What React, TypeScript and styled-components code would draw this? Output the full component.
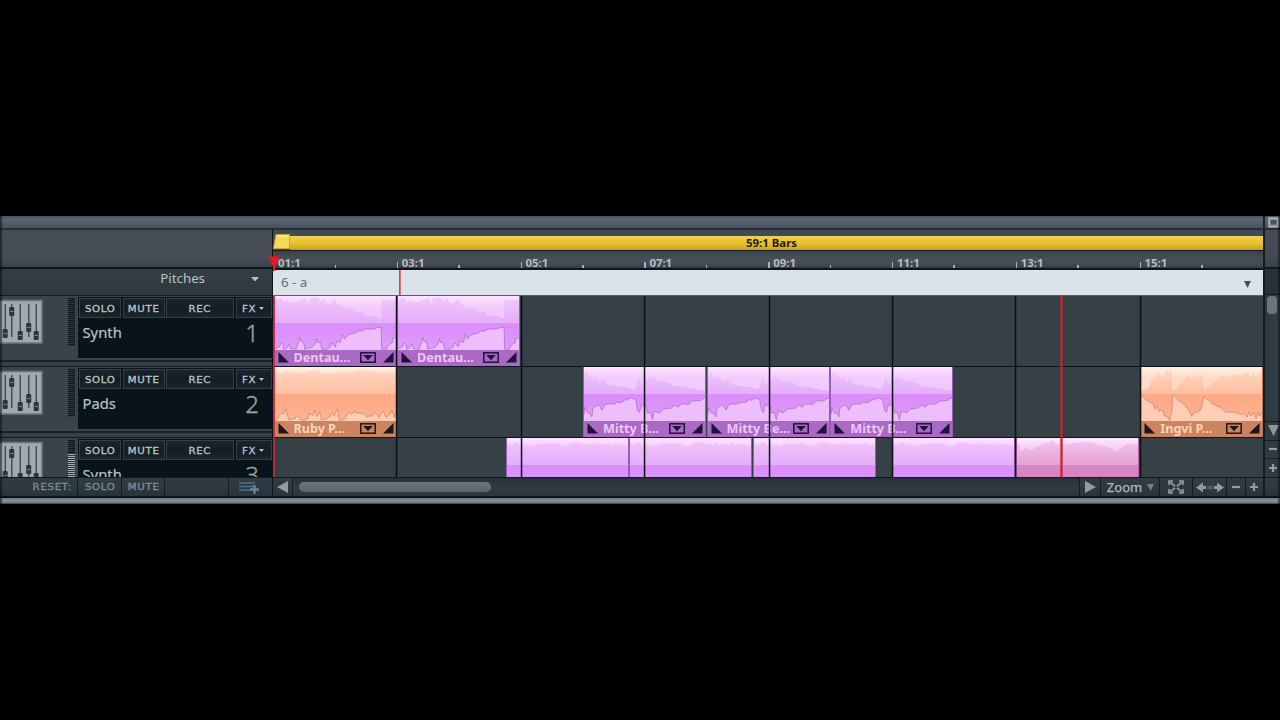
import React from "react";
import styled, { createGlobalStyle } from "styled-components";

const Global = createGlobalStyle`
  * { box-sizing: border-box; }
  body { margin: 0; background: #000; overflow: hidden; }
`;

const sans = `"Noto Sans", "Open Sans", sans-serif`;
const wide = `"DejaVu Sans", "Liberation Sans", sans-serif`;

type Point = [number, number];
type Tone = "violet" | "orange" | "pink";

const tones = {
  violet: { pale: "#f1c9fc", top: "#e6affa", low: "#da8ffa", lowEnd: "#dd9dfb", lowPale: "#eebdfc", edge: "#9a5cba", foot: "#a969c5", text: "#edc6f8", glow: "#ffe2ff", ink: "#1f1438" },
  orange: { pale: "#ffdac6", top: "#ffc0a3", low: "#feaa86", lowEnd: "#ffb393", lowPale: "#ffccb4", edge: "#b9765a", foot: "#cc835f", text: "#ffd3bd", glow: "#fff0e2", ink: "#1c1718" },
  pink: { pale: "#f4caf2", top: "#e6a4d3", low: "#d883c2", lowEnd: "#d883c2", lowPale: "#f2bfe0", edge: "#b566a5", foot: "#b5669c", text: "#ffdcf3", glow: "#ffe6ff", ink: "#2a1230" },
};

/* ---------- shell ---------- */

const Stage = styled.main`
  height: 720px;
  padding-top: 216px;
  background: #000;
  font-family: ${sans};
`;

const Arranger = styled.section`
  position: relative;
  width: 1280px;
  height: 288px;
  display: flex;
  flex-direction: column;
  background: #364147;
  overflow: hidden;
  &::after {
    content: "";
    position: absolute;
    inset: 0;
    pointer-events: none;
    box-shadow: inset 2px 0 1px rgba(8, 12, 16, 0.55), inset -2px 0 1px rgba(8, 12, 16, 0.5);
  }
`;

const HeaderGrid = styled.div`
  flex: none;
  display: grid;
  grid-template-columns: 1263px 17px;
`;

const Columns = styled.div`
  flex: none;
  display: grid;
  grid-template-columns: 272px 991px 17px;
  height: 266px;
`;

const Column = styled.div`
  display: flex;
  flex-direction: column;
  min-width: 0;
  overflow: hidden;
`;

const TopBar = styled.div`
  height: 14px;
  background: linear-gradient(#505b66, #5a6471 35%, #4a535f 90%);
  border-bottom: 2px solid #262d36;
`;

const TopCorner = styled(TopBar)`
  display: flex;
  align-items: center;
  justify-content: center;
  padding-left: 2px;
  border-left: 2px solid #1b222a;
`;

const LowerEdge = styled.div`
  flex: none;
  height: 8px;
  background: linear-gradient(#09131a 0 2px, #66757b 2px, #849197 4px, #6e7c82 7px, #2e383d 8px);
`;

/* ---------- left column ---------- */

const HeadPanel = styled.div`
  flex: none;
  height: 37px;
  background: linear-gradient(#434b53, #474d57 40%, #454d56 75%, #39434a);
`;

const PitchHead = styled.div`
  flex: none;
  height: 28px;
  display: flex;
  justify-content: flex-end;
  align-items: center;
  padding: 0 13px 8px 0;
  gap: 46px;
  border-top: 2px solid #0d151b;
  background: linear-gradient(#333e45, #2e393f);
  color: #b9c3c7;
  font-size: 13.3px;
  > svg { margin-top: 2px; }
`;

const TrackHeads = styled.div`
  flex: none;
  height: 182px;
  overflow: hidden;
`;

const TrackHead = styled.div`
  height: 71px;
  display: flex;
  align-items: flex-start;
  border-top: 1px solid #121b20;
  padding-top: 1px;
  background: linear-gradient(#38434a 0 64px, #172126 64px 66px, #354147 66px);
`;

const MixerIcon = styled.svg`
  flex: none;
  width: 44px;
  height: 46px;
  margin-top: 2px;
`;

const Meter = styled.div<{ $live?: boolean }>`
  flex: none;
  width: 7px;
  height: 48px;
  margin: 1px 3px 0 24px;
  background: ${(p) =>
    p.$live
      ? "repeating-linear-gradient(transparent 0 1px, #2c373d 1px 2px), linear-gradient(#0d171c 0 13px, #a4b0b4 13px)"
      : "repeating-linear-gradient(#0d171c 0 1px, #2c373d 1px 2px)"};
`;

const Display = styled.div`
  width: 194px;
  height: 61px;
  background: #09131a;
  padding: 1px;
`;

const Buttons = styled.div`
  display: grid;
  grid-template-columns: 42px 42px 68px 36px;
  gap: 1.5px;
  height: 20px;
`;

const Button = styled.span`
  display: flex;
  align-items: center;
  justify-content: center;
  gap: 4px;
  border: 1px solid #344046;
  padding-top: 1px;
  background: linear-gradient(#1a252b, #131d23 50%, #1a252a);
  color: #b9c3c6;
`;

const Caps = styled.span<{ $from?: string }>`
  display: inline-block;
  font: 8.8px ${wide};
  letter-spacing: 0.6px;
  margin-right: -0.6px;
  -webkit-text-stroke: 0.3px currentColor;
  transform: scaleX(1.16);
  transform-origin: ${(p) => p.$from ?? "center"};
`;

const NameLine = styled.div`
  display: flex;
  justify-content: space-between;
  padding: 0 12px 0 3.5px;
  color: #b6c3c8;
  font-size: 14.8px;
  line-height: 28px;
  > span:first-child { -webkit-text-stroke: 0.2px currentColor; }
`;

const TrackNumber = styled.span`
  color: #a3a29c;
  font-size: 24px;
  font-weight: 300;
  line-height: 29px;
  -webkit-text-stroke: 0.35px currentColor;
`;

const FootBar = styled.div`
  flex: none;
  height: 19px;
  display: flex;
  align-items: stretch;
  border-top: 1px solid #101a20;
  background: linear-gradient(#303d44, #2c383e 60%, #28343a);
`;

const FootCell = styled.span<{ $w: number; $line?: boolean }>`
  width: ${(p) => p.$w}px;
  flex: none;
  display: flex;
  align-items: center;
  justify-content: center;
  border-right: 1.5px solid ${(p) => (p.$line === false ? "transparent" : "#121c22")};
  color: #7f8d94;
`;

const ResetCell = styled(FootCell)`
  justify-content: flex-end;
  padding-right: 6px;
`;

const LabelCell = styled(FootCell)`
  padding-left: 1px;
`;

/* ---------- timeline column ---------- */

const Center = styled(Column)`
  border-left: 1px solid #0c1419;
`;

const RangeRow = styled.div`
  flex: none;
  height: 21px;
  padding-top: 4px;
  display: flex;
  background: #424a54;
  border-bottom: 1px solid #15191e;
`;

const RangeBar = styled.div`
  flex: 1;
  display: flex;
  align-items: center;
  justify-content: center;
  padding: 0 10px 1px 0;
  height: 14px;
  margin-top: 2px;
  background: linear-gradient(#e9d06a, #f0cc34 20%, #e3bd30 60%, #c9a11f);
  color: #241c06;
  font-size: 11.4px;
  font-weight: 700;
`;

const RangeGrip = styled.svg`
  flex: none;
  width: 17px;
  height: 16px;
`;

const Ruler = styled.div`
  flex: none;
  height: 17px;
  display: flex;
  background: linear-gradient(#39414a, #47505a 45%, #424b54 80%, #323b43);
  color: #b8bfc2;
`;

const RulerCell = styled.div`
  width: 123.8px;
  flex: none;
  display: flex;
  align-items: flex-end;
`;

const Tick = styled.i<{ $h: number }>`
  width: 1.5px;
  height: ${(p) => p.$h}px;
  background: #aab2b6;
`;

const RulerLabel = styled.span`
  width: 60px;
  padding: 0 0 0.5px 3.5px;
  font-size: 11.4px;
  font-weight: 700;
  line-height: 11px;
`;

const PitchStrip = styled.div`
  position: relative;
  flex: none;
  height: 28px;
  display: flex;
  align-items: center;
  justify-content: space-between;
  padding: 0 12px 1px 8px;
  border-top: 2px solid #0d151b;
  border-bottom: 1px solid #56606a;
  background: #dae2ea;
  color: #687078;
  font-size: 13.3px;
`;

const PitchCaret = styled.span`
  display: flex;
  padding-top: 4px;
`;

const PitchMark = styled.i`
  position: absolute;
  left: 126px;
  top: 0;
  width: 2px;
  height: 25px;
  background: linear-gradient(90deg, #dc3c46 1px, #e0707a 1px);
`;

const Lanes = styled.div`
  position: relative;
  flex: none;
  height: 181px;
  background: #364146;
  overflow: hidden;
`;

const Lane = styled.div`
  height: 71px;
  display: flex;
  border-bottom: 1.5px solid #0b1418;
`;

const GridLine = styled.i<{ $x: number }>`
  position: absolute;
  top: 0;
  bottom: 0;
  left: ${(p) => p.$x - 1}px;
  width: 3px;
  background: linear-gradient(90deg, rgba(8, 14, 20, 0.22) 1px, rgba(8, 12, 18, 0.95) 1px 2px, rgba(8, 14, 20, 0.3) 2px);
`;

const Playhead = styled.i<{ $x: number; $start?: boolean }>`
  position: absolute;
  top: 0;
  bottom: 0;
  left: ${(p) => p.$x}px;
  width: ${(p) => (p.$start ? 2 : 3)}px;
  background: ${(p) =>
    p.$start
      ? "linear-gradient(90deg, #d81e30 1px, rgba(224, 30, 56, 0.75) 1px)"
      : "linear-gradient(90deg, rgba(196, 30, 40, 0.65) 1px, #cf202b 1px 2px, rgba(196, 30, 40, 0.6) 2px)"};
`;

const StartMarker = styled.svg`
  position: absolute;
  left: 268px;
  top: 40px;
  width: 12px;
  height: 15px;
`;

const ClipBox = styled.div<{ $gap: number; $tone: Tone }>`
  flex: none;
  width: 123px;
  height: 70px;
  margin-left: ${(p) => p.$gap}px;
  border-right: 1px solid ${(p) => tones[p.$tone].edge};
  border-left: 1px solid ${(p) => tones[p.$tone].edge};
  background: ${(p) => tones[p.$tone].foot};
`;

const Wave = styled.svg`
  display: block;
  width: 121px;
  height: 54px;
`;

const ClipFoot = styled.div<{ $tone: Tone }>`
  height: 15px;
  display: flex;
  align-items: center;
  padding: 0 2px 1px 3px;
  color: ${(p) => tones[p.$tone].text};
  font-size: 12.6px;
  font-weight: 700;
  line-height: 13px;
`;

const ClipName = styled.span`
  width: 66px;
  padding-left: 5px;
  white-space: nowrap;
`;

const Fade = styled.svg`
  flex: none;
  width: 11px;
  height: 11px;
`;

const MenuIcon = styled.svg`
  flex: none;
  width: 16px;
  height: 11px;
  margin: 0 7px 0 5px;
`;

/* ---------- scroll bars and zoom tools ---------- */

const ScrollTrack = styled.div`
  flex: 1;
  display: flex;
  align-items: center;
  padding-left: 6px;
  border-right: 1.5px solid #121c22;
  background: linear-gradient(#263238, #303c42 60%, #29353b);
`;

const Thumb = styled.div`
  width: 192px;
  height: 10px;
  border-radius: 5px;
  background: linear-gradient(#69757a, #5a666c);
`;

const ZoomCell = styled(FootCell)`
  gap: 5px;
  padding-left: 1px;
  color: #b0babe;
  font: 13px ${sans};
  -webkit-text-stroke: 0.25px currentColor;
`;

const SideColumn = styled(Column)`
  border-left: 2px solid #131b21;
`;

const SideTop = styled.div`
  height: 37px;
  background: linear-gradient(#444b57, #434b56 70%, #38414a);
`;

const SideCap = styled.div`
  height: 28px;
  border-top: 2px solid #10191f;
  border-bottom: 1px solid #10191f;
  background: #27333a;
`;

const SideScroll = styled.div`
  height: 126px;
  padding: 1px 2px;
  background: linear-gradient(90deg, #2b373d, #35414a);
`;

const SideThumb = styled.div`
  width: 10px;
  height: 18px;
  border-radius: 4px;
  background: #6b767c;
`;

const SideButton = styled.div`
  height: 18.5px;
  padding-left: 1px;
  display: flex;
  align-items: center;
  justify-content: center;
  border-top: 1.5px solid #121c22;
  background: #2f3b41;
`;

/* ---------- wave forms ---------- */

interface Envelope {
  top: Point[];
  bottom: Point[];
  rough: [number, number];
}

const dentau: Envelope = {
  rough: [2.2, 1],
  top: [[0, 5], [3, 3], [7, 2], [9, 7], [12, 3], [16, 7], [22, 6], [25, 3], [31, 3], [33, 8], [36, 2], [43, 2], [45, 5], [48, 5], [49, 2], [51, 7], [57, 7], [60, 4], [62, 7], [66, 9], [70, 12], [78, 14], [84, 16], [88, 15], [90, 19], [97, 20], [107, 22], [107.5, 4], [122, 4]],
  bottom: [[0, 53], [5, 50], [6, 47], [8, 48], [9, 53], [12, 52], [14, 48], [16, 53], [21, 53], [24, 46], [25, 42], [26, 45], [29, 46], [30, 53], [37, 52], [41, 47], [42, 43], [43, 47], [46, 47], [47, 53], [53, 53], [56, 51], [57, 47], [61, 51], [62, 45], [66, 46], [68, 38], [70, 43], [75, 38], [81, 37], [83, 35], [88, 35], [91, 33], [99, 33], [107, 31], [107.5, 53], [112, 53], [115, 48], [118, 47], [119, 42], [122, 43]],
};

const ruby: Envelope = {
  rough: [2.5, 1.4],
  top: [[0, 5], [10, 6], [12, 3], [17, 6], [30, 5], [40, 3], [50, 6], [70, 5], [90, 4], [110, 5], [122, 4]],
  bottom: [[0, 53], [4, 50], [5, 47], [9, 46], [11, 42], [13, 49], [14, 53], [20, 51], [23, 48], [26, 53], [33, 52], [35, 46], [38, 48], [40, 43], [42, 50], [45, 45], [47, 53], [54, 51], [57, 47], [60, 48], [63, 42], [65, 53], [71, 52], [73, 46], [77, 47], [80, 44], [84, 47], [90, 46], [93, 50], [98, 49], [101, 45], [105, 50], [109, 44], [112, 50], [116, 48], [118, 43], [120, 50], [122, 45]],
};

const mitty: Envelope = {
  rough: [1.6, 1],
  top: [[0, 12], [1, 6], [4, 7], [6, 13], [8, 8], [10, 14], [12, 9], [15, 15], [20, 13], [24, 17], [30, 18], [37, 20], [45, 21], [52, 22], [54, 13], [56, 10], [57, 17], [60, 19], [61, 7], [64, 14], [65, 8], [66, 12], [68, 6], [70, 13], [72, 10], [75, 15], [80, 14], [90, 18], [100, 20], [112, 22], [122, 24]],
  bottom: [[0, 48], [1, 40], [3, 46], [6, 47], [8, 50], [9, 41], [15, 38], [18, 43], [22, 37], [31, 37], [33, 35], [38, 35], [42, 32], [44, 34], [46, 31], [52, 32], [54, 44], [56, 46], [58, 37], [60, 39], [62, 37], [64, 46], [67, 45], [69, 53], [71, 44], [76, 46], [80, 42], [88, 41], [92, 38], [95, 40], [98, 37], [105, 37], [110, 34], [116, 34], [122, 31]],
};

const ingvi: Envelope = {
  rough: [1.6, 1],
  top: [[0, 25], [8, 20], [11, 12], [14, 13], [16, 6], [20, 8], [24, 8], [26, 3], [28, 5], [31, 4], [32, 24], [38, 19], [45, 12], [48, 8], [50, 11], [54, 7], [58, 12], [60, 7], [62, 11], [64, 23], [70, 17], [78, 13], [83, 8], [88, 11], [92, 7], [100, 8], [107, 5], [112, 11], [113, 4], [116, 12], [118, 3], [119, 10], [122, 3]],
  bottom: [[0, 28], [8, 35], [12, 36], [14, 42], [16, 39], [18, 44], [22, 43], [24, 49], [27, 50], [29, 53], [30, 47], [31, 46], [32, 28], [40, 35], [43, 37], [48, 43], [51, 49], [54, 46], [57, 45], [59, 44], [61, 40], [63, 29], [70, 35], [74, 38], [80, 40], [86, 45], [95, 45], [99, 47], [105, 47], [107, 50], [109, 45], [111, 49], [114, 45], [116, 52], [118, 45], [120, 49], [122, 46]],
};

const steady: Envelope = {
  rough: [4, 0],
  top: [[0, 4], [4, 7], [10, 6], [22, 8], [35, 6], [50, 6], [62, 9], [64, 4], [80, 6], [100, 6], [122, 7]],
  bottom: [[0, 54], [122, 54]],
};

const swell: Envelope = {
  rough: [1.2, 0],
  top: [[0, 3], [1, 8], [2, 5], [4, 14], [6, 12], [8, 10], [16, 12], [20, 9], [26, 6], [33, 4], [36, 2], [40, 6], [50, 6], [60, 5], [72, 4], [84, 7], [95, 11], [100, 14], [105, 10], [112, 6], [122, 6]],
  bottom: [[0, 54], [122, 54]],
};

/* Subdivides an envelope and adds a repeatable jitter to every step. */
function sample(points: Point[], rough: number, seed: number): string {
  const out: string[] = [];
  for (let i = 0; i < points.length - 1; i++) {
    const [x0, y0] = points[i];
    const [x1, y1] = points[i + 1];
    const steps = Math.max(1, Math.round((x1 - x0) / 1.5));
    for (let s = 0; s < steps; s++) {
      const x = x0 + ((x1 - x0) * s) / steps;
      const n = Math.abs(Math.sin((x + seed) * 12.9898) * 43758.5453) % 1;
      const y = y0 + ((y1 - y0) * s) / steps + (n - 0.5) * rough;
      out.push(`${x.toFixed(1)},${Math.min(54, y).toFixed(1)}`);
    }
  }
  const last = points[points.length - 1];
  out.push(`${last[0]},${last[1]}`);
  return out.join(" L");
}

interface ClipData {
  gap: number;
  tone: Tone;
  name?: string;
  env: Envelope;
}

function Clip({ gap, tone, name, env, id }: ClipData & { id: string }) {
  const c = tones[tone];
  const top = sample(env.top, env.rough[0], 3);
  const bottom = sample(env.bottom, env.rough[1], 7);
  return (
    <ClipBox $gap={gap} $tone={tone}>
      <Wave viewBox="0 0 122 54" preserveAspectRatio="none">
        <defs>
          <linearGradient id={`${id}-glow`} x1="0" y1="0" x2="0" y2="1">
            <stop offset="0" stopColor={c.glow} />
            <stop offset="0.45" stopColor={c.pale} />
            <stop offset="1" stopColor={c.pale} />
          </linearGradient>
          <linearGradient id={`${id}-top`} gradientUnits="userSpaceOnUse" x1="0" y1="0" x2="0" y2="27">
            <stop offset="0" stopColor={c.pale} />
            <stop offset="0.9" stopColor={c.top} />
          </linearGradient>
          <linearGradient id={`${id}-low`} gradientUnits="userSpaceOnUse" x1="0" y1="27" x2="0" y2="54">
            <stop offset="0.2" stopColor={c.low} />
            <stop offset="1" stopColor={c.lowEnd} />
          </linearGradient>
        </defs>
        <rect width="122" height="27" fill={`url(#${id}-glow)`} />
        <rect y="27" width="122" height="27" fill={c.lowPale} />
        <path d={`M${top} L122,27 L0,27 Z`} fill={`url(#${id}-top)`} />
        <path d={`M0,27 L${bottom} L122,27 Z`} fill={`url(#${id}-low)`} />
        {env.rough[1] > 0 && <path d={`M${bottom}`} fill="none" stroke={c.edge} strokeWidth="0.9" opacity="0.65" />}
        <rect width="122" height="1.3" fill={c.glow} />
      </Wave>
      {name && (
        <ClipFoot $tone={tone}>
          <Fade viewBox="0 0 11 11"><path d="M0.5 0V10.5H11Z" fill={c.ink} /></Fade>
          <ClipName>{name}</ClipName>
          <MenuIcon viewBox="0 0 16 11">
            <rect x="0.8" y="0.8" width="14.4" height="9.4" fill="none" stroke={c.ink} strokeWidth="1.5" />
            <path d="M3.2 3H12.8L8 8.2Z" fill={c.ink} />
          </MenuIcon>
          <Fade viewBox="0 0 11 11"><path d="M10.5 0V10.5H0Z" fill={c.ink} /></Fade>
        </ClipFoot>
      )}
    </ClipBox>
  );
}

const lanes: ClipData[][] = [
  [
    { gap: 0.5, tone: "violet", name: "Dentau...", env: dentau },
    { gap: 0.5, tone: "violet", name: "Dentau...", env: dentau },
  ],
  [
    { gap: 0.5, tone: "orange", name: "Ruby P...", env: ruby },
    { gap: 186.5, tone: "violet", name: "Mitty B...", env: mitty },
    { gap: 0.5, tone: "violet", name: "Mitty Be...", env: mitty },
    { gap: 0.8, tone: "violet", name: "Mitty B...", env: mitty },
    { gap: 187, tone: "orange", name: "Ingvi P...", env: ingvi },
  ],
  [
    { gap: 232.7, tone: "violet", env: steady },
    { gap: 0.8, tone: "violet", env: steady },
    { gap: 0.8, tone: "violet", env: steady },
    { gap: 16, tone: "violet", env: steady },
    { gap: 1, tone: "pink", env: swell },
  ],
];

const tracks = ["Synth", "Pads", "Synth"];
const bars = ["01:1", "03:1", "05:1", "07:1", "09:1", "11:1", "13:1", "15:1"];
const faders: Point[] = [[5, 30], [11.5, 8], [20, 32], [28.5, 24], [36, 32]];

function Mixer() {
  return (
    <MixerIcon viewBox="0 0 44 46">
      <rect x="-1" y="1.5" width="43" height="42.5" fill="#9eaaae" stroke="#6d797e" strokeWidth="1.6" />
      {faders.map(([x, y]) => (
        <g key={x}>
          <path d={`M${x + 0.3} 5V38`} stroke="#39444a" strokeWidth="1.3" />
          <rect x={x - 2.3} y={y} width="5" height="9" rx="1" fill="#2c353b" />
          <path d={`M${x - 1.5} ${y + 4.5}h3.5`} stroke="#728086" strokeWidth="1" />
        </g>
      ))}
    </MixerIcon>
  );
}

const Caret = ({ w, h, fill }: { w: number; h: number; fill: string }) => (
  <svg width={w} height={h} viewBox="0 0 10 10" preserveAspectRatio="none">
    <path d="M0 0H10L5 10Z" fill={fill} />
  </svg>
);

const Sign = ({ plus }: { plus?: boolean }) => (
  <svg width="10" height="10" viewBox="0 0 10 10">
    <path d={plus ? "M1 5H9M5 1V9" : "M1 5H9"} stroke="#929da2" strokeWidth="2.2" />
  </svg>
);

function Header() {
  return (
    <HeaderGrid>
      <TopBar />
      <TopCorner>
        <svg width="11" height="11" viewBox="0 0 11 11">
          <rect x="1" y="1" width="9" height="8.8" fill="#8e96a1" stroke="#a9b0b9" strokeWidth="1.6" />
          <rect x="2.6" y="3" width="6" height="4.6" fill="#4c5460" />
        </svg>
      </TopCorner>
    </HeaderGrid>
  );
}

function TrackColumn() {
  return (
    <Column>
      <HeadPanel />
      <PitchHead>
        <span>Pitches</span>
        <Caret w={8} h={4.5} fill="#b9c3c7" />
      </PitchHead>
      <TrackHeads>
        {tracks.map((name, i) => (
          <TrackHead key={i}>
            <Mixer />
            <Meter $live={i === 2} />
            <Display>
              <Buttons>
                <Button><Caps>SOLO</Caps></Button>
                <Button><Caps>MUTE</Caps></Button>
                <Button><Caps>REC</Caps></Button>
                <Button><Caps>FX</Caps><Caret w={5} h={3} fill="#b9c3c6" /></Button>
              </Buttons>
              <NameLine>
                <span>{name}</span>
                <TrackNumber>{i + 1}</TrackNumber>
              </NameLine>
            </Display>
          </TrackHead>
        ))}
      </TrackHeads>
      <FootBar>
        <ResetCell $w={78}><Caps $from="right">RESET:</Caps></ResetCell>
        <LabelCell $w={43.5}><Caps>SOLO</Caps></LabelCell>
        <LabelCell $w={43.5}><Caps>MUTE</Caps></LabelCell>
        <FootCell $w={64} />
        <FootCell $w={43} $line={false}>
          <svg width="22" height="13" viewBox="0 0 22 13">
            <path d="M0 2H16M0 5.5H14M0 9H11" stroke="#526f8b" strokeWidth="1.6" />
            <path d="M11 8.5H20M15.5 4V13" stroke="#6385a6" strokeWidth="2.3" />
          </svg>
        </FootCell>
      </FootBar>
    </Column>
  );
}

function Timeline() {
  return (
    <Center>
      <RangeRow>
        <RangeGrip viewBox="0 0 17 16">
          <path d="M3 0.5H16.5V14.5H0.5Z" fill="#f5d95c" stroke="#cfa52a" />
          <path d="M4 1.5H15.5V3H3.6Z" fill="#fae893" />
        </RangeGrip>
        <RangeBar>59:1 Bars</RangeBar>
      </RangeRow>
      <Ruler>
        {bars.map((b, i) => (
          <RulerCell key={b}>
            <Tick $h={i === 0 ? 0 : 6} />
            <RulerLabel>{b}</RulerLabel>
            <Tick $h={3} />
          </RulerCell>
        ))}
      </Ruler>
      <PitchStrip>
        <span>6 - a</span>
        <PitchMark />
        <PitchCaret><Caret w={7} h={7} fill="#465058" /></PitchCaret>
      </PitchStrip>
      <Lanes>
        {lanes.map((clips, i) => (
          <Lane key={i}>
            {clips.map((c, j) => (
              <Clip key={j} id={`clip-${i}-${j}`} {...c} />
            ))}
          </Lane>
        ))}
        {[123, 248, 371, 496, 619, 742, 867].map((x) => (
          <GridLine key={x} $x={x} />
        ))}
        <Playhead $x={0} $start />
        <Playhead $x={787} />
      </Lanes>
      <FootBar>
        <FootCell $w={20}>
          <svg width="11" height="12" viewBox="0 0 11 12"><path d="M11 0V12L0 6Z" fill="#929ca1" /></svg>
        </FootCell>
        <ScrollTrack><Thumb /></ScrollTrack>
        <FootCell $w={21}>
          <svg width="11" height="12" viewBox="0 0 11 12"><path d="M0 0V12L11 6Z" fill="#929ca1" /></svg>
        </FootCell>
        <ZoomCell $w={59}>Zoom<Caret w={7} h={7} fill="#737f85" /></ZoomCell>
        <FootCell $w={33}>
          <svg width="16" height="14" viewBox="0 0 16 14">
            <path d="M2 2L14 12M14 2L2 12" stroke="#8f9a9f" strokeWidth="1.7" />
            <path d="M1 5V1H5M11 1H15V5M15 9V13H11M5 13H1V9" fill="none" stroke="#8f9a9f" strokeWidth="1.7" />
            <circle cx="8" cy="7" r="1.4" fill="#27333a" />
          </svg>
        </FootCell>
        <FootCell $w={34}>
          <svg width="28" height="11" viewBox="0 0 28 11">
            <path d="M0 5.5L7 0.5V4H10V7H7V10.5ZM28 5.5L21 0.5V4H18V7H21V10.5Z" fill="#8f9a9f" />
            <path d="M12 3.5V7.5M14 3.5V7.5M16 3.5V7.5" stroke="#6e7a80" />
          </svg>
        </FootCell>
        <FootCell $w={18.5}><Sign /></FootCell>
        <FootCell $w={17.5} $line={false}><Sign plus /></FootCell>
      </FootBar>
    </Center>
  );
}

function VerticalTools() {
  return (
    <SideColumn>
      <SideTop />
      <SideCap />
      <SideScroll><SideThumb /></SideScroll>
      <SideButton><Caret w={11} h={11} fill="#8d989d" /></SideButton>
      <SideButton><Sign /></SideButton>
      <SideButton><Sign plus /></SideButton>
      <FootBar />
    </SideColumn>
  );
}

export default function App() {
  return (
    <Stage>
      <Global />
      <Arranger>
        <Header />
        <Columns>
          <TrackColumn />
          <Timeline />
          <VerticalTools />
        </Columns>
        <LowerEdge />
        <StartMarker viewBox="0 0 12 15">
          <path d="M0 0.5H12L7 11V15H5V11Z" fill="#ee1420" />
        </StartMarker>
      </Arranger>
    </Stage>
  );
}
